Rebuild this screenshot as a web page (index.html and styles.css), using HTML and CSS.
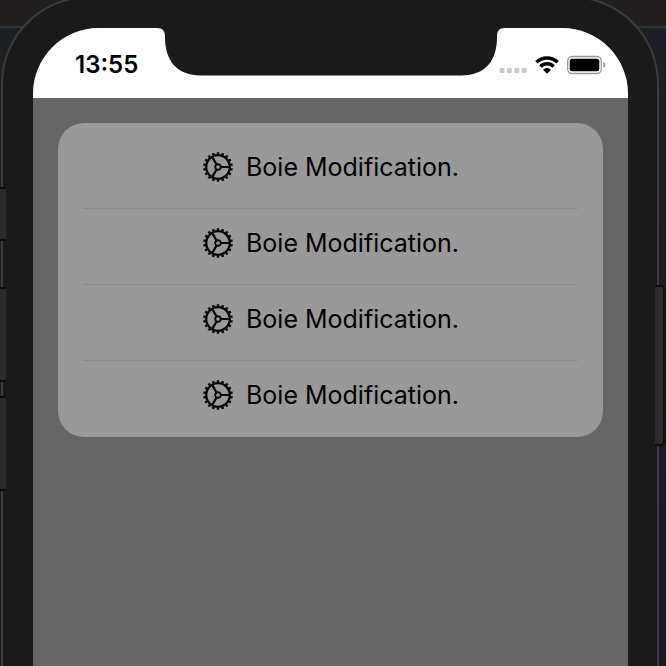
FILE: index.html
```html
<!DOCTYPE html>
<html lang="en">
<head>
<meta charset="utf-8">
<meta name="viewport" content="width=device-width, initial-scale=1">
<title>Boie Modification</title>
<link rel="stylesheet" href="styles.css">
</head>
<body>
<svg class="defs" aria-hidden="true">
  <symbol id="gear" viewBox="-16 -16 32 32">
    <g fill="none" stroke="#080808">
      <circle r="13.500" stroke-width="2.600" pathLength="180" stroke-dasharray="5 5" stroke-dashoffset="-2.500"/>
      <circle r="11.800" stroke-width="2.300"/>
      <circle r="2.800" stroke-width="1.900"/>
      <path d="M3 0H12M-1.500 -2.600L-6 -10.400M-1.500 2.600L-6 10.400" stroke-width="2.200"/>
    </g>
  </symbol>
</svg>
<div class="phone">
  <span class="key key-mute"></span>
  <span class="key key-up"></span>
  <span class="key key-down"></span>
  <span class="key key-power"></span>
  <div class="screen">
    <header class="status">
      <svg class="notch" viewBox="0 0 348 48" aria-hidden="true"><path d="M0 -1V0C6 0 8 3 8 9C8 33 20 47.500 44 47.500H304C328 47.500 340 33 340 9C340 3 342 0 348 0V-1Z" fill="#1a1a1a"/></svg>
      <time class="time">13:55</time>
      <div class="indicators">
        <svg width="28" height="20" viewBox="0 0 28 20" aria-hidden="true"><g fill="#cbcbcb"><rect x="0.500" y="13" width="5" height="5" rx="1.300"/><rect x="7.900" y="13" width="5" height="5" rx="1.300"/><rect x="15.300" y="13" width="5" height="5" rx="1.300"/><rect x="22.700" y="13" width="5" height="5" rx="1.300"/></g></svg>
        <svg width="24" height="20" viewBox="0 0 24 20" aria-hidden="true"><g fill="none" stroke="#000" stroke-width="3.500"><path d="M1.400 7.300A15.200 15.200 0 0 1 22.600 7.300"/><path d="M5.400 11.500A9.400 9.400 0 0 1 18.600 11.500"/></g><path d="M8 14.800A5.600 5.600 0 0 1 16 14.800L12 18.800Z"/></svg>
        <svg width="40" height="20" viewBox="0 0 40 20" aria-hidden="true"><rect x="0.700" y="1.500" width="33.600" height="17" rx="4.500" fill="none" stroke="#999" stroke-width="1.300"/><rect x="2.700" y="3.700" width="29.600" height="12.600" rx="2.500"/><path d="M36.300 7Q38.500 8.100 38.500 10T36.300 13Z" fill="#999"/></svg>
      </div>
    </header>
    <main class="content">
      <ul class="card">
        <li class="row"><svg class="gear" aria-hidden="true"><use href="#gear"/></svg><span>Boie Modification.</span></li>
        <li class="row"><svg class="gear" aria-hidden="true"><use href="#gear"/></svg><span>Boie Modification.</span></li>
        <li class="row"><svg class="gear" aria-hidden="true"><use href="#gear"/></svg><span>Boie Modification.</span></li>
        <li class="row"><svg class="gear" aria-hidden="true"><use href="#gear"/></svg><span>Boie Modification.</span></li>
      </ul>
    </main>
  </div>
</div>
</body>
</html>
```

FILE: styles.css
```css
* {
  box-sizing: border-box;
}

body {
  margin: 0;
  min-height: 100vh;
  overflow: hidden;
  display: flow-root;
  background: linear-gradient(#221e1f 26px, #343136 26px, #343136 28px, #1c1f24 28px, #1a1a22);
  font-family: Inter, "Liberation Sans", sans-serif;
  color: #000;
}

.defs {
  position: absolute;
  width: 0;
  height: 0;
}

.phone {
  position: relative;
  margin: -4px 7px 0 1px;
  min-height: calc(100vh + 4px);
  padding: 30px 29px 0 30px;
  display: flex;
  border: 2px solid #3b3b3c;
  border-bottom: 0;
  border-radius: 88px 88px 0 0;
  background: #1a1a1a;
}

.screen {
  flex: 1;
  border-radius: 66px 66px 0 0;
  overflow: hidden;
  background: #666;
}

.status {
  position: relative;
  height: 70px;
  padding: 4px 21px 0 42px;
  display: flex;
  align-items: center;
  justify-content: space-between;
  background: #fff;
}

.notch {
  position: absolute;
  top: 0;
  left: 50%;
  width: 348px;
  height: 48px;
  margin-left: -174px;
  overflow: visible;
}

.time {
  font-size: 24px;
  line-height: 28px;
  font-weight: 600;
}

.indicators {
  display: flex;
  gap: 8px;
}

.content {
  padding: 25px;
}

.card {
  margin: 0;
  padding: 28px 25px 26px;
  list-style: none;
  border-radius: 26px;
  background: #999;
}

.row {
  display: flex;
  align-items: center;
  justify-content: center;
  gap: 12px;
  font-size: 25px;
  line-height: 32px;
}

.row + .row {
  margin-top: 25px;
  padding-top: 18px;
  border-top: 1px solid #8b8b8b;
}

.gear {
  width: 32px;
  height: 32px;
}

.key {
  position: absolute;
  left: -3px;
  width: 6px;
  border: 2px solid #0c0c0c;
  border-width: 2px 0;
  background: #2b2b2b;
}

.key-mute {
  top: 189px;
  height: 54px;
}

.key-up {
  top: 289px;
  height: 95px;
}

.key-down {
  top: 398px;
  height: 95px;
}

.key-power {
  left: auto;
  right: -8px;
  top: 287px;
  width: 10px;
  height: 161px;
  border-width: 2px 2px 2px 0;
  border-radius: 0 4px 4px 0;
}
```
